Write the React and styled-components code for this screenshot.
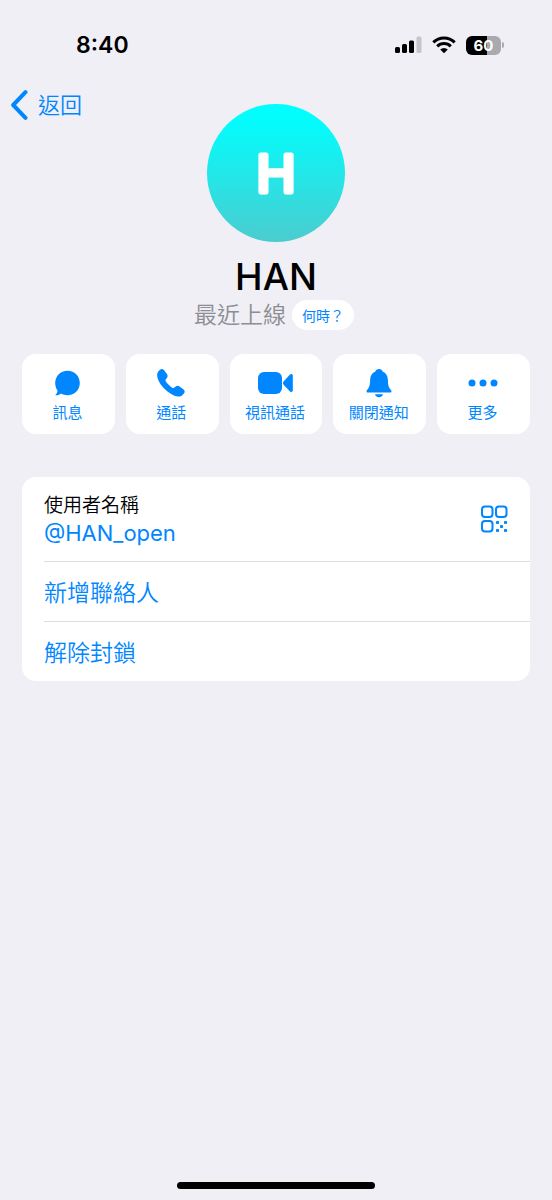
import styled, { createGlobalStyle } from "styled-components";

const GlobalStyle = createGlobalStyle`
  * {
    box-sizing: border-box;
  }

  body {
    margin: 0;
    background: #efeff5;
    color: #000000;
    font-family: Inter, "Noto Sans CJK TC", sans-serif;
  }

  button {
    border: none;
    padding: 0;
    font-family: inherit;
    font-weight: 350;
    color: #0086ff;
    cursor: pointer;
  }
`;

const Screen = styled.div`
  min-height: 100vh;
  display: flex;
  flex-direction: column;
`;

const StatusBar = styled.div`
  height: 88px;
  padding: 2px 48px 0 76px;
  display: flex;
  align-items: center;
  justify-content: space-between;
`;

const Time = styled.div`
  font-size: 23px;
  font-weight: 600;
`;

const StatusIcons = styled.div`
  display: flex;
  align-items: center;
  gap: 10px;
`;

const Header = styled.header`
  display: grid;
  grid-template-columns: 1fr auto 1fr;
  align-items: start;
`;

const BackButton = styled.button`
  justify-self: start;
  margin-left: 10px;
  display: flex;
  align-items: center;
  gap: 10px;
  background: none;
  font-size: 22px;
  line-height: 34px;
`;

const Avatar = styled.svg`
  width: 138px;
  height: 138px;
  margin-top: 16px;
  display: block;
`;

const Name = styled.h1`
  margin: 12px 0 0;
  font-size: 37px;
  line-height: 45px;
  font-weight: 500;
  text-align: center;
`;

const LastSeen = styled.div`
  padding-right: 4px;
  display: flex;
  align-items: center;
  justify-content: center;
  gap: 6px;
  font-size: 23px;
  font-weight: 350;
  line-height: 32px;
  color: #8d8d93;
`;

const WhenButton = styled.button`
  height: 30px;
  padding: 0 10px;
  border-radius: 15px;
  background: #ffffff;
  font-size: 14px;
  font-weight: 400;
`;

const Actions = styled.div`
  margin: 23px 22px 0;
  display: grid;
  grid-template-columns: repeat(5, 1fr);
  gap: 11px;
`;

const ActionButton = styled.button`
  height: 80px;
  padding: 13px 2px 0 0;
  display: flex;
  flex-direction: column;
  align-items: center;
  background: #ffffff;
  border-radius: 14px;
  font-size: 15px;
  font-weight: 400;
  line-height: 24px;
  white-space: nowrap;

  svg {
    margin-bottom: 2px;
  }
`;

const Card = styled.section`
  margin: 43px 22px 24px;
  padding-left: 22px;
  background: #ffffff;
  border-radius: 14px;
`;

const Row = styled.div`
  min-height: ${(props) => (props.$tall ? "84px" : "60px")};
  display: flex;
  align-items: center;
  justify-content: space-between;

  & + & {
    border-top: 1px solid #dedee2;
  }
`;

const FieldName = styled.div`
  font-size: 19px;
  font-weight: 350;
  line-height: 28px;
`;

const Username = styled.a`
  display: block;
  color: #0086ff;
  font-size: 22px;
  line-height: 26px;
  text-decoration: none;
`;

const QrButton = styled.button`
  margin-right: 22px;
  display: flex;
  background: none;
`;

const RowButton = styled.button`
  flex: 1;
  padding-top: 2px;
  background: none;
  font-size: 23px;
  line-height: 34px;
  text-align: left;
`;

const HomeIndicator = styled.div`
  width: 36%;
  height: 7px;
  margin: auto auto 11px;
  border-radius: 4px;
  background: #000000;
`;

const BatteryBox = styled.div`
  display: flex;
  align-items: center;
  gap: 1px;
`;

const BatteryBody = styled.div`
  width: 35px;
  height: 19px;
  border-radius: 6px;
  background: linear-gradient(to right, #000000 60%, #a9a9ae 60%);
  color: #ffffff;
  font-size: 15px;
  line-height: 19px;
  font-weight: 700;
  text-align: center;
`;

const BatteryTip = styled.div`
  width: 2px;
  height: 6px;
  border-radius: 0 2px 2px 0;
  background: #a9a9ae;
`;

const SignalIcon = () => (
  <svg width="28" height="18" viewBox="0 0 28 18">
    <rect x="1" y="11" width="5" height="6" rx="1.5" />
    <rect x="8" y="8" width="5" height="9" rx="1.5" />
    <rect x="15" y="4.5" width="5" height="12.5" rx="1.5" />
    <rect x="22.500" y="0.500" width="5" height="16.500" rx="1.5" fill="#c5c5ca" />
  </svg>
);

const WifiIcon = () => (
  <svg width="24" height="18" viewBox="0 0 24 18">
    <g fill="none" stroke="#000000" strokeWidth="3">
      <path d="M1.300 6.400A15.300 15.300 0 0 1 22.700 6.400" />
      <path d="M5.200 10.400A9.700 9.700 0 0 1 18.800 10.400" />
    </g>
    <path d="M12 17.200L8.200 13.500A5.500 5.500 0 0 1 15.800 13.500Z" />
  </svg>
);

const BackIcon = () => (
  <svg width="18" height="32" viewBox="0 0 18 32">
    <path
      d="M15.500 3.200L3.200 16L15.500 28.800"
      fill="none"
      stroke="currentColor"
      strokeWidth="4"
      strokeLinecap="round"
      strokeLinejoin="round"
    />
  </svg>
);

const MessageIcon = () => (
  <svg width="32" height="32" viewBox="0 0 32 32" fill="currentColor">
    <path d="M16.500 3.800C23.500 3.800 28.800 9.200 28.800 16C28.800 22.900 23.400 28.200 16.500 28.200C14.100 28.200 11.900 27.600 10 26.500C8.600 27.800 6.700 28.500 4.900 28.300C4.400 28.200 4.300 27.800 4.700 27.500C5.900 26.600 6.500 25.200 6.500 23.600C5 21.500 4.200 18.900 4.200 16C4.200 9.200 9.500 3.800 16.500 3.800Z" />
  </svg>
);

const PhoneIcon = () => (
  <svg width="32" height="32" viewBox="0 0 32 32" fill="currentColor">
    <path d="M5 2.800C6.200 1.700 8 1.900 9.100 3.300L11.900 7C12.900 8.300 12.800 9.700 11.900 10.900L10.700 12.500C10.300 13 10.300 13.500 10.600 14.100C12 16.500 15 19.500 17.500 20.900C18.100 21.200 18.600 21.200 19.100 20.800L20.700 19.500C21.900 18.600 23.300 18.500 24.600 19.400L28.300 22.200C29.900 23.400 30.200 25.100 28.900 26.400L27.500 27.900C26.200 29.200 24.600 29.800 22.600 29.500C18.700 28.900 13.700 26 9.700 22C5.500 17.800 2.600 12.800 2.200 8.900C2 7 2.500 5.400 3.700 4.100Z" />
  </svg>
);

const VideoIcon = () => (
  <svg width="36" height="32" viewBox="0 0 36 32" fill="currentColor">
    <rect x="1" y="5" width="24" height="22" rx="6" />
    <path d="M26.800 14.200L33 7.600C34 6.600 35.800 7.100 35.800 8.500V23.500C35.800 24.900 34 25.400 33 24.400L26.800 18C25.700 16.800 25.700 15.400 26.800 14.200Z" />
  </svg>
);

const BellIcon = () => (
  <svg width="32" height="32" viewBox="0 0 32 32" fill="currentColor">
    <path d="M16 2C17.900 2 19.200 3 19.600 4.600C23 5.900 24.800 8.900 24.900 12.900C25 18 25.500 20 27.600 22.500C28.400 23.500 28.600 24 28.400 24.700C28.200 25.300 27.700 25.600 27 25.600H5C4.300 25.600 3.800 25.300 3.600 24.700C3.400 24 3.600 23.500 4.400 22.500C6.500 20 7 18 7.100 12.900C7.200 8.900 9 5.900 12.400 4.600C12.800 3 14.100 2 16 2Z" />
    <path d="M12 27.300H20C19.700 29 18.100 30.200 16 30.200C13.900 30.200 12.300 29 12 27.300Z" />
  </svg>
);

const MoreIcon = () => (
  <svg width="32" height="32" viewBox="0 0 32 32" fill="currentColor">
    <circle cx="5" cy="16" r="3.500" />
    <circle cx="16" cy="16" r="3.500" />
    <circle cx="27" cy="16" r="3.500" />
  </svg>
);

const QrIcon = () => (
  <svg width="28" height="28" viewBox="0 0 28 28">
    <g fill="none" stroke="currentColor" strokeWidth="2">
      <rect x="2" y="1.500" width="10.500" height="10.500" rx="3" />
      <rect x="16" y="1.500" width="10.500" height="10.500" rx="3" />
      <rect x="2" y="16" width="10.500" height="10.500" rx="3" />
    </g>
    <g fill="currentColor">
      <rect x="16" y="16" width="3" height="3" rx="0.800" />
      <rect x="24" y="16" width="3" height="3" rx="0.800" />
      <rect x="20" y="20" width="3" height="3" rx="0.800" />
      <rect x="16" y="24" width="3" height="3" rx="0.800" />
      <rect x="24" y="24" width="3" height="3" rx="0.800" />
    </g>
  </svg>
);

const actions = [
  { label: "訊息", Icon: MessageIcon },
  { label: "通話", Icon: PhoneIcon },
  { label: "視訊通話", Icon: VideoIcon },
  { label: "關閉通知", Icon: BellIcon },
  { label: "更多", Icon: MoreIcon },
];

const App = () => {
  return (
    <Screen lang="zh-Hant">
      <GlobalStyle />
      <StatusBar>
        <Time>8:40</Time>
        <StatusIcons>
          <SignalIcon />
          <WifiIcon />
          <BatteryBox>
            <BatteryBody>60</BatteryBody>
            <BatteryTip />
          </BatteryBox>
        </StatusIcons>
      </StatusBar>

      <Header>
        <BackButton>
          <BackIcon />
          返回
        </BackButton>
        <Avatar viewBox="0 0 138 138">
          <defs>
            <linearGradient id="avatar" x1="0" y1="0" x2="0" y2="1">
              <stop offset="0" stopColor="#00ffff" />
              <stop offset="0.15" stopColor="#05fbfb" />
              <stop offset="1" stopColor="#4bcccf" />
            </linearGradient>
          </defs>
          <circle cx="69" cy="69" r="69" fill="url(#avatar)" />
          <text
            x="69"
            y="88"
            fontFamily="Liberation Sans, sans-serif"
            fontSize="54"
            fontWeight="400"
            textAnchor="middle"
            fill="#ffffff"
            stroke="#ffffff"
            strokeWidth="5"
            strokeLinejoin="round"
          >
            H
          </text>
        </Avatar>
      </Header>

      <Name>HAN</Name>
      <LastSeen>
        最近上線
        <WhenButton>何時？</WhenButton>
      </LastSeen>

      <Actions>
        {actions.map(({ label, Icon }) => (
          <ActionButton key={label}>
            <Icon />
            {label}
          </ActionButton>
        ))}
      </Actions>

      <Card>
        <Row $tall>
          <div>
            <FieldName>使用者名稱</FieldName>
            <Username href="#username">@HAN_open</Username>
          </div>
          <QrButton aria-label="QR Code">
            <QrIcon />
          </QrButton>
        </Row>
        <Row>
          <RowButton>新增聯絡人</RowButton>
        </Row>
        <Row>
          <RowButton>解除封鎖</RowButton>
        </Row>
      </Card>

      <HomeIndicator />
    </Screen>
  );
};

export default App;
